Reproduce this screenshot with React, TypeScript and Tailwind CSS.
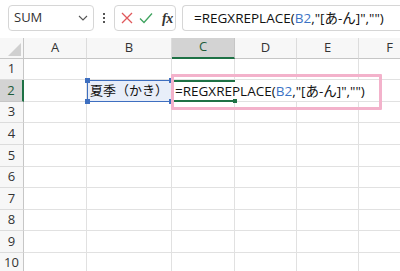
import React from "react";

const cols = [
  { label: "A", w: "w-[63px]" },
  { label: "B", w: "w-[85px]" },
  { label: "C", w: "w-[63px]" },
  { label: "D", w: "w-[62px]" },
  { label: "E", w: "w-[62px]" },
  { label: "F", w: "w-[62px]" },
];

const rows = [1, 2, 3, 4, 5, 6, 7, 8, 9, 10];

const font = "font-['Open_Sans','Noto_Sans_CJK_JP',sans-serif]";

const Formula: React.FC = () => (
  <span className="whitespace-nowrap">
    =REGXREPLACE(<span className="text-[#3b73c5]">B2</span>,"[あ-ん]","")
  </span>
);

const App: React.FC = () => {
  return (
    <div className={`w-[400px] h-[271px] overflow-hidden bg-white text-[#222] ${font}`}>
      {/* formula bar */}
      <div className="h-[37.6px] flex items-start pt-[5px] pl-[8px] gap-[6px] bg-white">
        <div className="w-[86px] h-[26px] border border-[#d6d6d6] rounded-[4px] flex items-center justify-between pl-[5px] pr-[5px] text-[13px] text-[#333]">
          <span>SUM</span>
          <svg width="10" height="6" viewBox="0 0 10 6" fill="none">
            <path d="M1 1l4 4 4-4" stroke="#555" strokeWidth="1.1" />
          </svg>
        </div>
        <div className="w-[8px] h-[26px] flex flex-col items-center justify-center gap-[2px]">
          <span className="w-[2px] h-[2px] bg-[#555]" />
          <span className="w-[2px] h-[2px] bg-[#555]" />
          <span className="w-[2px] h-[2px] bg-[#555]" />
        </div>
        <div className="w-[62px] h-[26px] border border-[#d6d6d6] rounded-[4px] flex items-center pl-[6px] gap-[6px]">
          <svg width="12" height="12" viewBox="0 0 12 12">
            <path d="M1 1l10 10M11 1L1 11" stroke="#e0585b" strokeWidth="1.3" />
          </svg>
          <svg width="14" height="12" viewBox="0 0 14 12" fill="none">
            <path d="M1 6.5l4 4L13 1.5" stroke="#3fa35f" strokeWidth="1.3" />
          </svg>
          <span className="ml-[3px] text-[14px] italic font-['Liberation_Serif',serif] text-[#333] font-bold tracking-[-0.5px]">
            fx
          </span>
        </div>
        <div className="flex-1 h-[26px] border border-[#d6d6d6] border-r-0 rounded-l-[4px] flex items-center pl-[11px] text-[13.5px] text-[#111]">
          <Formula />
        </div>
      </div>

      {/* grid */}
      <div className="relative">
        {/* header row */}
        <div className="flex h-[21px]">
          <div className="w-[24px] shrink-0 border-r border-b border-[#c6c6c6] bg-[#f7f7f7] relative">
            <svg className="absolute right-[2px] bottom-[2px]" width="13" height="13" viewBox="0 0 13 13">
              <path d="M13 0V13H0Z" fill="#d0d0d0" />
            </svg>
          </div>
          {cols.map((c) => (
            <div
              key={c.label}
              className={`${c.w} shrink-0 flex items-center justify-center text-[13px] border-r ${
                c.label === "C"
                  ? "bg-[#d3d3d3] border-b-2 border-b-[#1e7145] border-r-[#c6c6c6] text-[#1e5c3a]"
                  : "bg-[#f7f7f7] border-b border-b-[#c6c6c6] border-r-[#dcdcdc] text-[#333]"
              }`}
            >
              {c.label}
            </div>
          ))}
        </div>

        {rows.map((r) => (
          <div key={r} className="flex h-[21.6px]">
            <div
              className={`w-[24px] shrink-0 flex items-center justify-center text-[13px] border-b ${
                r === 2
                  ? "bg-[#d3d3d3] border-r-2 border-r-[#1e7145] border-b-[#c6c6c6] text-[#1e5c3a]"
                  : "bg-[#f7f7f7] border-r border-r-[#c6c6c6] border-b-[#dcdcdc] text-[#333]"
              }`}
            >
              {r}
            </div>
            {cols.map((c) => {
              if (r === 2 && c.label === "B") {
                return (
                  <div
                    key={c.label}
                    className={`${c.w} shrink-0 relative border border-[#3e6fc0] bg-[#e8eef9] flex items-center pl-[2px] text-[13px] text-[#111]`}
                  >
                    夏季（かき）
                    <span className="absolute -left-[3px] -top-[3px] w-[5px] h-[5px] bg-[#3e6fc0]" />
                    <span className="absolute -right-[3px] -top-[3px] w-[5px] h-[5px] bg-[#3e6fc0]" />
                    <span className="absolute -left-[3px] -bottom-[3px] w-[5px] h-[5px] bg-[#3e6fc0]" />
                    <span className="absolute -right-[3px] -bottom-[3px] w-[5px] h-[5px] bg-[#3e6fc0]" />
                  </div>
                );
              }
              if (r === 2 && c.label === "C") {
                return (
                  <div
                    key={c.label}
                    className={`${c.w} shrink-0 relative z-10 border-y-2 border-[#1e7145] flex items-center pl-[3px] text-[13.5px] text-[#111]`}
                  >
                    <Formula />
                    <span className="absolute -right-[2px] -bottom-[3px] w-[4px] h-[4px] bg-[#1e7145]" />
                  </div>
                );
              }
              return (
                <div
                  key={c.label}
                  className={`${c.w} shrink-0 border-r border-b border-[#e1e1e1] ${
                    r === 2 && c.label !== "A" ? "border-r-0 border-b-[#e1e1e1]" : ""
                  }`}
                />
              );
            })}
          </div>
        ))}

        {/* annotation */}
        <div className="absolute left-[171px] top-[36px] w-[211px] h-[36px] border-[3px] border-[#f3b2cb] rounded-[1px] pointer-events-none z-20" />
      </div>
    </div>
  );
};

export default App;
